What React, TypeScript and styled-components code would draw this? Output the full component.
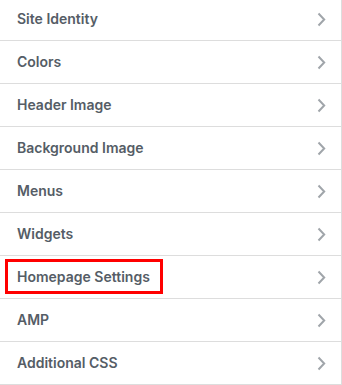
import React from "react";
import styled, { createGlobalStyle } from "styled-components";

const Global = createGlobalStyle`
  html, body { margin: 0; padding: 0; background: #fff; }
  body { font-family: Inter, "Open Sans", "Liberation Sans", sans-serif; }
`;

const Panel = styled.ul`
  list-style: none;
  margin: -2px 0 0 0;
  padding: 0;
  width: 342px;
  box-sizing: border-box;
  border-right: 1px solid #dddddd;
  background: #fff;
`;

const Row = styled.li`
  position: relative;
  display: flex;
  align-items: center;
  justify-content: space-between;
  height: 42px;
  padding: 0 15px 0 17px;
  border-bottom: 1px solid #dddddd;
  color: #555d66;
  font-size: 14px;
  font-weight: 600;
`;

const Label = styled.span`
  line-height: 1;
`;

const Highlight = styled.span`
  position: absolute;
  left: 5px;
  top: 3px;
  width: 158px;
  height: 35px;
  box-sizing: border-box;
  border: 3px solid #ff0000;
  pointer-events: none;
`;

const Chevron = () => (
  <svg width="9" height="15" viewBox="0 0 9 15" fill="none">
    <path d="M1.5 1.5 L7.2 7.5 L1.5 13.5" stroke="#a0a5aa" strokeWidth="2" />
  </svg>
);

const items = [
  "Site Identity",
  "Colors",
  "Header Image",
  "Background Image",
  "Menus",
  "Widgets",
  "Homepage Settings",
  "AMP",
  "Additional CSS",
];

export default function App() {
  return (
    <>
      <Global />
      <Panel>
        {items.map((it) => (
          <Row key={it}>
            <Label>{it}</Label>
            <Chevron />
            {it === "Homepage Settings" && <Highlight />}
          </Row>
        ))}
      </Panel>
    </>
  );
}
